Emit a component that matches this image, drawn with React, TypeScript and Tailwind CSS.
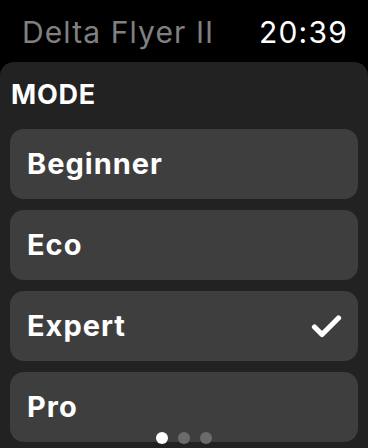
import React from 'react'

const modes = ['Beginner', 'Eco', 'Expert', 'Pro']

const Check = () => (
  <svg width="31" height="24" viewBox="0 0 31 24" fill="none">
    <path d="M3.5 13 L11 20.5 L27.5 4" stroke="white" strokeWidth="5.2" strokeLinecap="round" strokeLinejoin="round" />
  </svg>
)

const App = () => {
  const selected = 'Expert'
  return (
    <div className="relative w-[368px] h-[448px] bg-black overflow-hidden" style={{ fontFamily: 'Inter, "Noto Sans", sans-serif' }}>
      <div className="h-[62px] flex justify-between items-center pl-[22px] pr-[20px] pt-[2px]">
        <span className="text-[30px] text-[#808080] tracking-[1.1px]">Delta Flyer II</span>
        <span className="text-[30px] text-white tracking-[1.2px]">20:39</span>
      </div>

      <div className="bg-[#222222] rounded-t-[14px] px-[10px] h-[386px]">
        <div className="h-[67px] flex items-center pl-[1px]">
          <h1 className="text-[27px] font-bold text-white tracking-[0.8px]">MODE</h1>
        </div>
        <div className="flex flex-col gap-[11px]">
          {modes.map((m) => (
            <div key={m} className="h-[70px] rounded-[14px] bg-[#3e3e3e] flex items-center justify-between pl-[17px] pr-[16px]">
              <span className="text-[29px] font-bold text-white tracking-[1px]">{m}</span>
              {m === selected && <Check />}
            </div>
          ))}
        </div>
      </div>

      <div className="absolute left-0 right-0 top-[432px] flex justify-center gap-[10px]">
        <span className="w-[12px] h-[12px] rounded-full bg-white" />
        <span className="w-[12px] h-[12px] rounded-full bg-[#6b6b6b]" />
        <span className="w-[12px] h-[12px] rounded-full bg-[#6b6b6b]" />
      </div>
    </div>
  )
}

export default App
